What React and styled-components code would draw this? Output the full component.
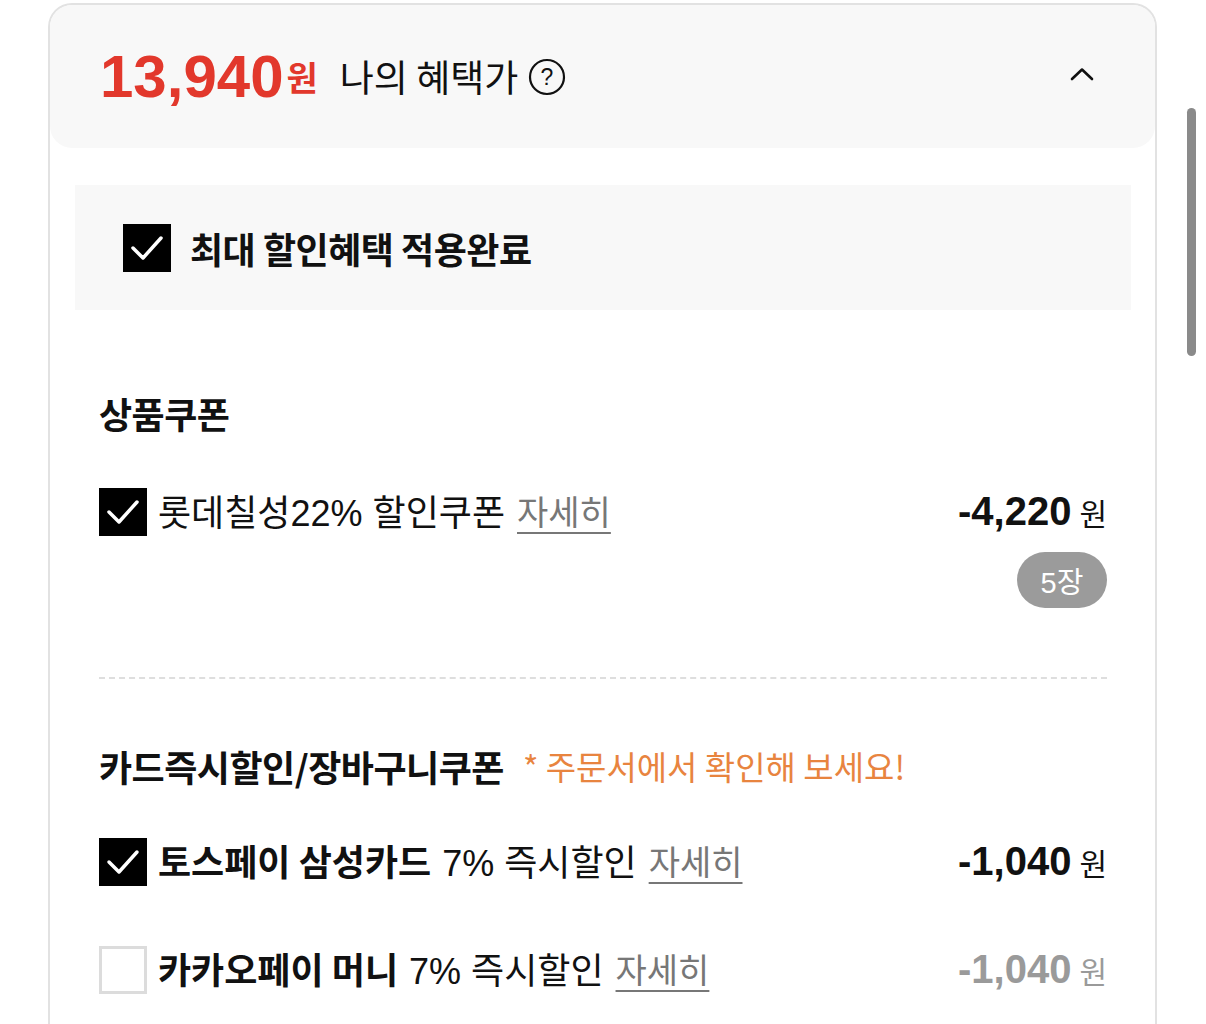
import React from "react";
import styled, { createGlobalStyle } from "styled-components";

const Global = createGlobalStyle`
  html, body { margin: 0; padding: 0; background: #fff; }
  body { font-family: "Liberation Sans", "Noto Sans CJK KR", sans-serif; color: #111; }
  * { box-sizing: border-box; }
`;

const Page = styled.div`
  position: relative;
  padding: 3px 49px 0 48px;
  height: 1024px;
  overflow: hidden;
`;

const ScrollThumb = styled.div`
  position: absolute;
  left: 1187px;
  top: 108px;
  width: 9px;
  height: 248px;
  border-radius: 5px;
  background: #8a8a8a;
`;

const Card = styled.div`
  border: 2px solid #e2e2e2;
  border-bottom: none;
  border-radius: 24px 24px 0 0;
  overflow: hidden;
  min-height: 1040px;
`;

const Header = styled.div`
  display: flex;
  align-items: center;
  height: 143px;
  padding: 0 61px 0 50px;
  background: #f8f8f8;
  border-radius: 0 0 22px 22px;
`;

const Price = styled.span`
  font-family: "Liberation Sans", "Noto Sans CJK KR", sans-serif;
  font-size: 60px;
  font-weight: 700;
  color: #e2382c;
  line-height: 1;
`;

const Won = styled.span`
  font-family: "Noto Sans CJK KR", sans-serif;
  font-size: ${(p) => p.$size || 32}px;
  font-weight: ${(p) => p.$weight || 400};
  color: ${(p) => p.$color || "inherit"};
  margin-left: ${(p) => p.$gap || 0}px;
`;

const HeaderLabel = styled.span`
  font-family: "Noto Sans CJK KR", sans-serif;
  font-size: 37px;
  color: #111;
  margin-left: 22px;
  margin-bottom: 2px;
`;

const HelpIcon = styled.svg`
  width: 38px;
  height: 38px;
  margin-left: 10px;
  margin-top: 1px;
`;

const Spacer = styled.div`
  flex: 1;
`;

const Chevron = styled.svg`
  width: 24px;
  height: 14px;
  margin-bottom: 6px;
`;

const Body = styled.div`
  padding: 37px 24px 0 25px;
`;

const AppliedBox = styled.div`
  display: flex;
  align-items: center;
  gap: 19px;
  height: 125px;
  padding-left: 48px;
  background: #f8f8f8;
`;

const BoldText = styled.span`
  font-family: "Noto Sans CJK KR", sans-serif;
  font-weight: 700;
  font-size: 36px;
  letter-spacing: -0.5px;
  color: #111;
`;

const Section = styled.div`
  padding: 0 24px 0 24px;
`;

const Heading = styled.div`
  display: flex;
  align-items: center;
  height: 48px;
  margin-top: ${(p) => p.$top}px;
  gap: 19px;
`;

const Note = styled.span`
  font-family: "Noto Sans CJK KR", sans-serif;
  font-size: 33px;
  color: #e8843f;
`;

const Row = styled.div`
  display: flex;
  align-items: center;
  height: 48px;
  margin-top: ${(p) => p.$top}px;
`;

const Label = styled.div`
  display: flex;
  align-items: center;
  flex: 1;
  margin-left: 11px;
  margin-bottom: 4px;
  font-family: "Liberation Sans", "Noto Sans CJK KR", sans-serif;
  font-size: 36px;
  white-space: nowrap;
`;

const Strong = styled.span`
  font-family: "Noto Sans CJK KR", sans-serif;
  font-weight: 700;
  margin-right: 11px;
`;

const Detail = styled.span`
  font-family: "Noto Sans CJK KR", sans-serif;
  font-size: 34px;
  color: #777;
  text-decoration: underline;
  text-decoration-thickness: 2px;
  text-underline-offset: 7px;
  margin-left: 12px;
`;

const Amount = styled.div`
  display: flex;
  align-items: baseline;
  margin-bottom: 2px;
  color: ${(p) => (p.$muted ? "#9a9a9a" : "#111")};
`;

const AmountNum = styled.span`
  font-family: "Liberation Sans", sans-serif;
  font-weight: 700;
  font-size: 40px;
`;

const BadgeRow = styled.div`
  display: flex;
  justify-content: flex-end;
  margin-top: 16px;
`;

const Badge = styled.span`
  display: inline-flex;
  align-items: center;
  justify-content: center;
  width: 90px;
  height: 56px;
  border-radius: 28px;
  background: #9b9b9b;
  color: #fff;
  font-family: "Liberation Sans", "Noto Sans CJK KR", sans-serif;
  font-size: 29px;
`;

const Dashed = styled.div`
  margin-top: 69px;
  border-top: 2px dashed #dedede;
`;

const Box = styled.span`
  display: inline-flex;
  align-items: center;
  justify-content: center;
  flex: none;
  width: 48px;
  height: 48px;
  background: ${(p) => (p.$checked ? "#000" : "#fff")};
  border: ${(p) => (p.$checked ? "none" : "3px solid #dcdcdc")};
`;

const Check = ({ checked }) => (
  <Box $checked={checked}>
    {checked && (
      <svg width="48" height="48" viewBox="0 0 48 48">
        <path d="M10 24 L20 34 L38 14" fill="none" stroke="#fff" strokeWidth="3.5" strokeLinecap="round" strokeLinejoin="round" />
      </svg>
    )}
  </Box>
);

const AmountCell = ({ value, muted }) => (
  <Amount $muted={muted}>
    <AmountNum>{value}</AmountNum>
    <Won $size={30} $gap={8}>원</Won>
  </Amount>
);

export default function App() {
  return (
    <>
      <Global />
      <Page>
        <Card>
          <Header>
            <Price>13,940</Price>
            <Won $size={34} $weight={700} $color="#e2382c" $gap={3}>원</Won>
            <HeaderLabel>나의 혜택가</HeaderLabel>
            <HelpIcon viewBox="0 0 38 38">
              <circle cx="19" cy="19" r="17" fill="none" stroke="#111" strokeWidth="2.2" />
              <text x="19" y="27" textAnchor="middle" fontSize="23" fontFamily="Liberation Sans, sans-serif" fill="#111">?</text>
            </HelpIcon>
            <Spacer />
            <Chevron viewBox="0 0 24 14">
              <path d="M2 12 L12 2.5 L22 12" fill="none" stroke="#111" strokeWidth="2.6" strokeLinecap="round" strokeLinejoin="round" />
            </Chevron>
          </Header>
          <Body>
            <AppliedBox>
              <Check checked />
              <BoldText>최대 할인혜택 적용완료</BoldText>
            </AppliedBox>
            <Section>
              <Heading $top={79}>
                <BoldText>상품쿠폰</BoldText>
              </Heading>
              <Row $top={51}>
                <Check checked />
                <Label>
                  롯데칠성22% 할인쿠폰
                  <Detail>자세히</Detail>
                </Label>
                <AmountCell value="-4,220" />
              </Row>
              <BadgeRow>
                <Badge>5장</Badge>
              </BadgeRow>
              <Dashed />
              <Heading $top={63}>
                <BoldText>카드즉시할인/장바구니쿠폰</BoldText>
                <Note>* 주문서에서 확인해 보세요!</Note>
              </Heading>
              <Row $top={48}>
                <Check checked />
                <Label>
                  <Strong>토스페이 삼성카드</Strong>7% 즉시할인
                  <Detail>자세히</Detail>
                </Label>
                <AmountCell value="-1,040" />
              </Row>
              <Row $top={60}>
                <Check checked={false} />
                <Label>
                  <Strong>카카오페이 머니</Strong>7% 즉시할인
                  <Detail>자세히</Detail>
                </Label>
                <AmountCell value="-1,040" muted />
              </Row>
            </Section>
          </Body>
        </Card>
        <ScrollThumb />
      </Page>
    </>
  );
}
